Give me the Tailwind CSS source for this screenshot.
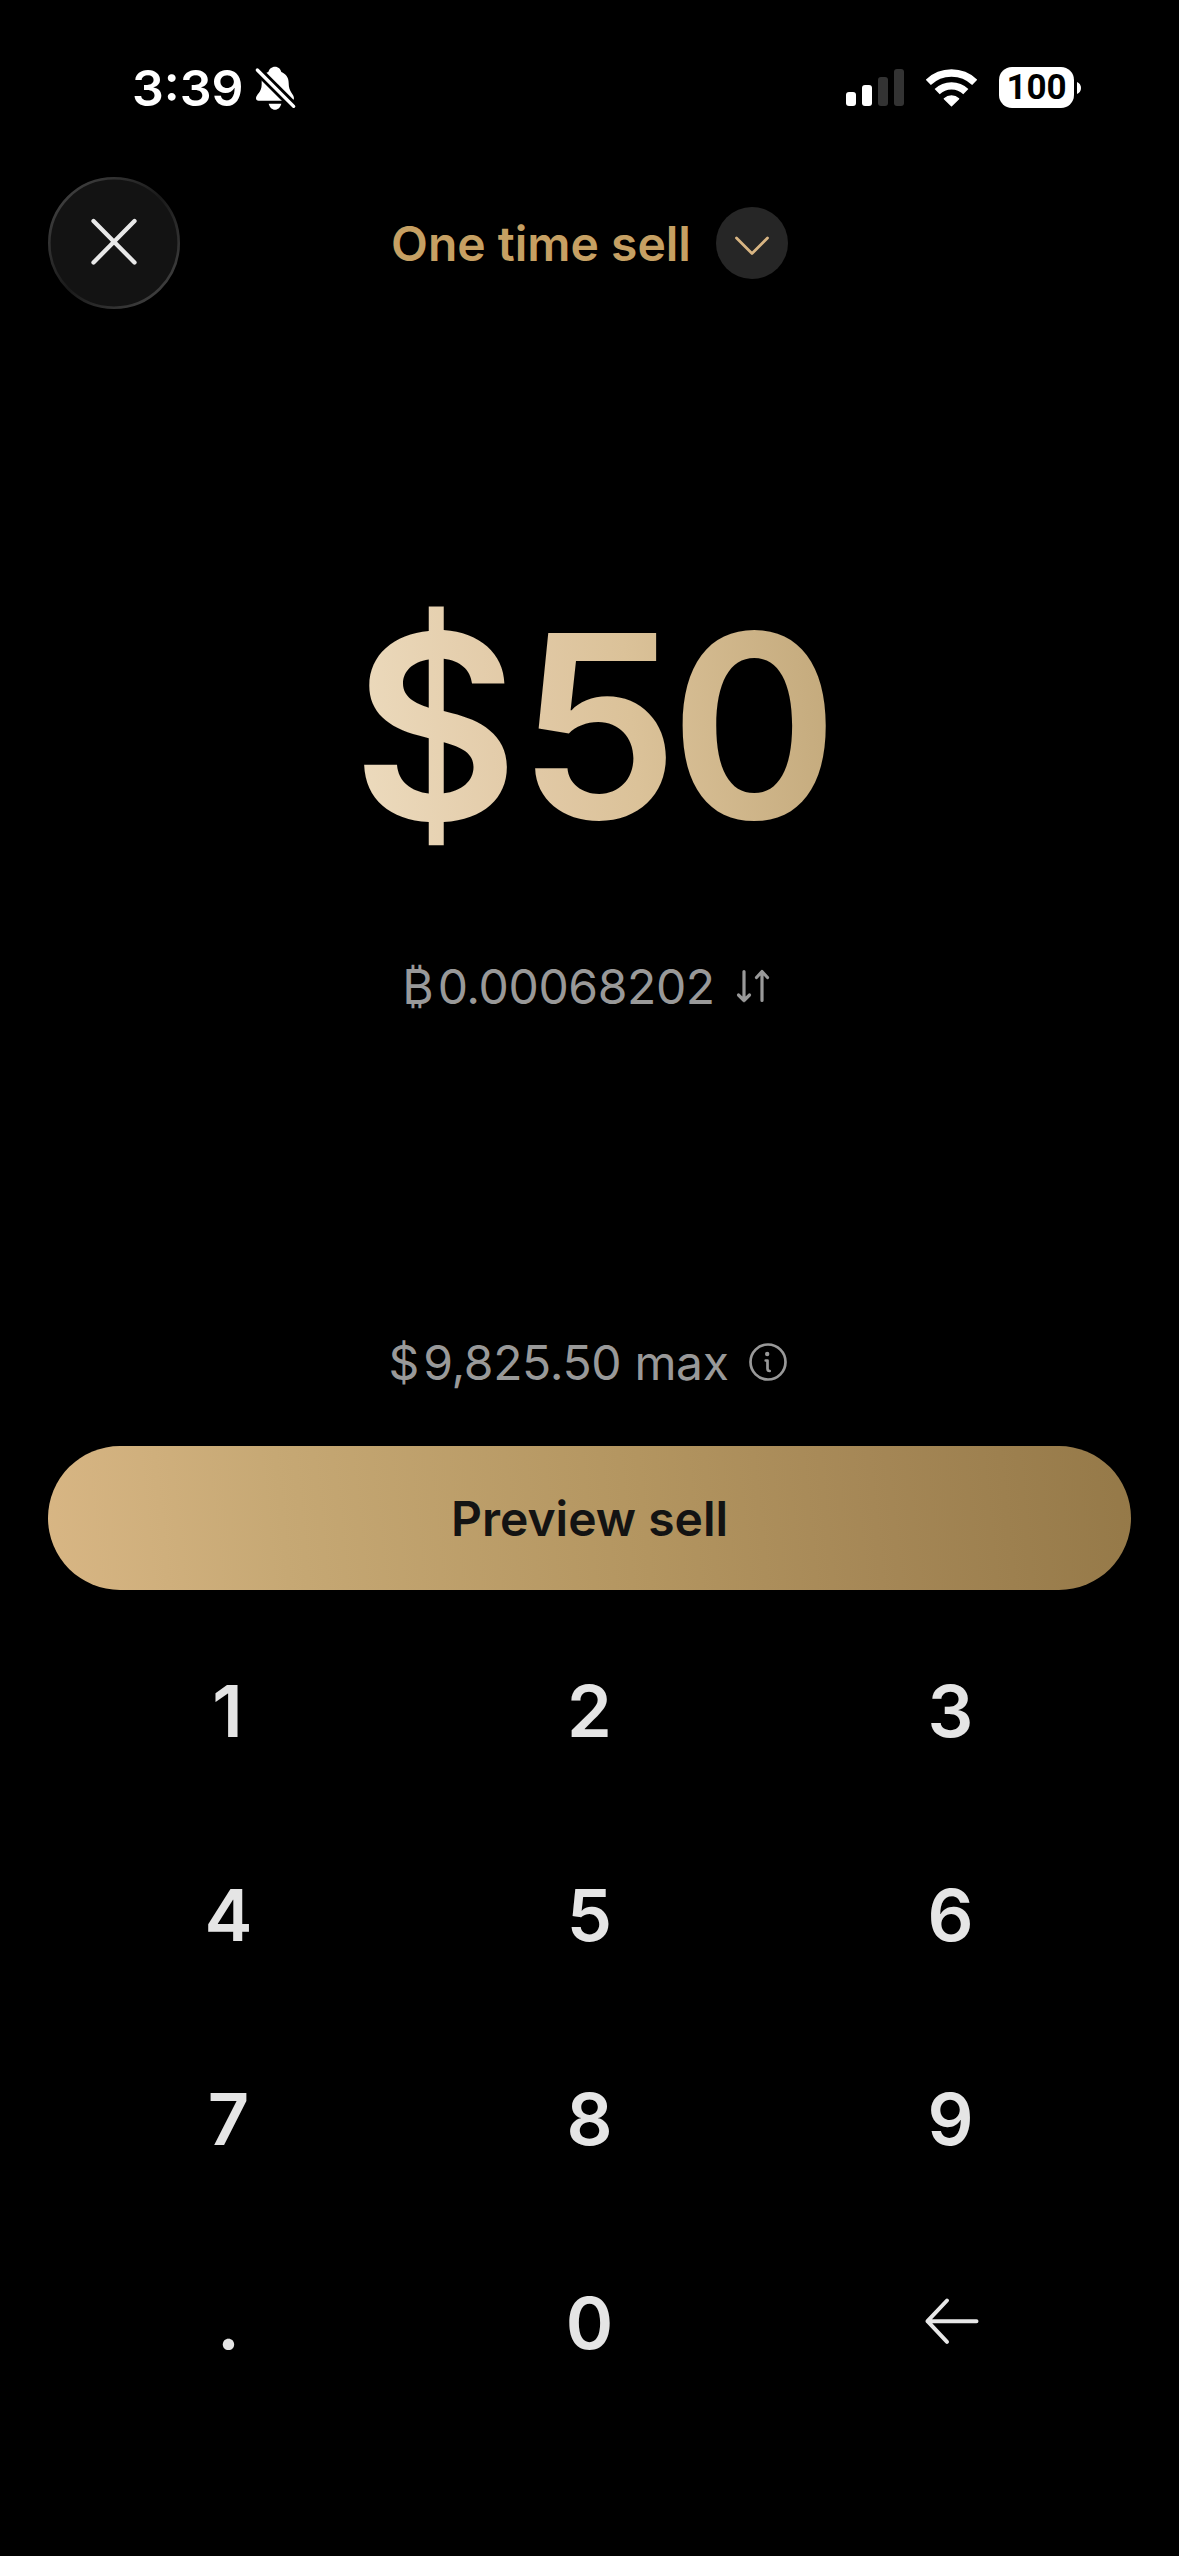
<!DOCTYPE html>
<html lang="en">
<head>
<meta charset="utf-8">
<title>One time sell</title>
<script src="https://cdn.jsdelivr.net/npm/@tailwindcss/browser@4"></script>
</head>
<body class="bg-black font-['Inter',sans-serif] text-white w-[1179px] h-[2556px] overflow-hidden flex flex-col">

<!-- Status bar -->
<header class="h-[177px] shrink-0 pt-[55px] pl-[132px] pr-[98px]">
  <div class="h-[65px] flex items-center justify-between">
    <div class="flex items-center">
      <span class="text-[50px] leading-[64px] font-semibold w-[121px]">3:39</span>
      <svg class="w-[44px] h-[47px] mt-[2px]" viewBox="429 46 132 141" fill="#fff">
        <path d="M438 146C438 134 455 128 455 105V97C455 79 464 71 475 67C477 58 485 51 495 51C505 51 512 58 514 67C527 73 536 82 536 100C536 128 552 132 552 146Q552 153 545 153H446Q438 153 438 146Z"/>
        <path d="M476 162H514C511 173 504 180 495 180C486 180 479 173 476 162Z"/>
        <path d="M430 49L570 189" stroke="#000" stroke-width="27"/>
        <path d="M442 61L551 170" stroke="#fff" stroke-width="10" stroke-linecap="round"/>
      </svg>
    </div>
    <div class="flex items-center gap-[22px]">
      <div class="flex items-end gap-[6px] h-[37px]">
        <i class="w-[10px] h-[14px] rounded-[3px] bg-white"></i>
        <i class="w-[10px] h-[21px] rounded-[3px] bg-white"></i>
        <i class="w-[10px] h-[29px] rounded-[3px] bg-[#333]"></i>
        <i class="w-[10px] h-[37px] rounded-[3px] bg-[#333]"></i>
      </div>
      <svg class="w-[51px] h-[38px]" viewBox="318 55.5 153 114" fill="none" stroke="#fff">
        <path d="M325 95.500A100.500 100.500 0 0 1 464 95.500" stroke-width="22"/>
        <path d="M351.500 123.400A62 62 0 0 1 437.500 123.400" stroke-width="22"/>
        <path d="M394.500 166L373 144.500A33 33 0 0 1 416 144.500Z" fill="#fff" stroke-width="4" stroke-linejoin="round"/>
      </svg>
      <div class="flex items-center gap-[3px]">
        <div class="w-[75px] h-[41px] rounded-[13px] bg-white text-black flex items-center justify-center font-['Roboto',sans-serif] text-[35px] leading-[41px] font-bold">100</div>
        <svg class="w-[4px] h-[12px]" viewBox="0 0 4 12" fill="#fff"><path d="M0 0C2.500 1 4 3.200 4 6S2.500 11 0 12Z"/></svg>
      </div>
    </div>
  </div>
</header>

<!-- Title bar -->
<nav class="grid grid-cols-[132px_1fr_132px] px-[48px] h-[132px] shrink-0 items-center">
  <button aria-label="Close">
    <svg class="size-[132px]" viewBox="0 0 132 132" fill="none">
      <defs>
        <linearGradient id="rim" x1="0.1" y1="0.1" x2="0.9" y2="0.9">
          <stop offset="0" stop-color="#404040"/>
          <stop offset="0.5" stop-color="#1a1a1a"/>
          <stop offset="1" stop-color="#404040"/>
        </linearGradient>
      </defs>
      <circle cx="66" cy="66" r="64.700" fill="#131313" stroke="url(#rim)" stroke-width="2.600"/>
      <path d="M45.500 44L86.500 85.500M86.500 44L45.500 85.500" stroke="#e8e8e8" stroke-width="4.300" stroke-linecap="round"/>
    </svg>
  </button>
  <div class="flex justify-center items-center gap-[25px]">
    <span class="text-[48px] leading-[60px] font-semibold text-[#c6a063] pt-px">One time sell</span>
    <svg class="size-[72px]" viewBox="0 0 72 72" fill="none">
      <circle cx="36" cy="36" r="36" fill="#262626"/>
      <path d="M20.500 31L36 46.500L51.500 31" stroke="#d8b583" stroke-width="2.800" stroke-linecap="round" stroke-linejoin="round"/>
    </svg>
  </div>
</nav>

<!-- Amount -->
<main class="h-[1137px] shrink-0 flex flex-col items-center">
  <div class="mt-[267px] ml-[3px] text-[256px] leading-[300px] font-semibold bg-[linear-gradient(84deg,#eddcbf_0%,#e2caa7_36%,#dbc299_58%,#c3a97b_100%)] bg-clip-text text-transparent"><span class="tracking-[-1px]">$</span><span class="tracking-[-9px]">50</span></div>
  <div class="mt-[81px] flex items-center text-[48px] leading-[60px] text-[#999]">
    <span>₿</span>
    <span class="ml-[4px] tracking-[-0.38px]">0.00068202</span>
    <svg class="w-[36px] h-[40px] ml-[20px] mr-[6px]" viewBox="0 0 36 40" fill="none" stroke="#999" stroke-width="3.200" stroke-linecap="round" stroke-linejoin="round">
      <path d="M9 4.500V33.500M3.500 28L9 33.500L14.500 28"/>
      <path d="M27 33.500V4.500M21.500 10.500L27 4.500L32.500 10.500"/>
    </svg>
  </div>
  <div class="mt-[316px] flex items-center text-[48px] leading-[60px] text-[#999]">
    <span>$</span>
    <span class="ml-[4px] tracking-[-0.34px]">9,825.50 max</span>
    <svg class="size-[40px] ml-[19px] mr-[3px]" viewBox="0 0 40 40" fill="none" stroke="#999" stroke-linecap="round" stroke-linejoin="round">
      <circle cx="20" cy="19" r="17.500" stroke-width="2.700"/>
      <circle cx="19.200" cy="11" r="2.200" fill="#999" stroke="none"/>
      <path d="M17.700 17.500H19.500V25.500Q19.500 28 21.700 28" stroke-width="2.700"/>
    </svg>
  </div>
</main>

<button class="mx-[48px] h-[144px] shrink-0 rounded-full bg-[linear-gradient(84deg,#d8b684_0%,#c6a874_22%,#b39560_55%,#a58756_76%,#957948_100%)] pt-[2px] text-[48px] leading-[60px] font-semibold text-[#131313]">Preview sell</button>

<!-- Keypad -->
<div class="grid grid-cols-3 auto-rows-[204px] px-[48px] mt-[19px] text-[72px] font-semibold text-[#e5e5e5] place-items-center">
  <span class="pr-[2px]">1</span><span>2</span><span>3</span>
  <span>4</span><span>5</span><span>6</span>
  <span>7</span><span>8</span><span>9</span>
  <span>.</span><span>0</span>
  <svg class="size-[60px]" viewBox="0 0 60 60" fill="none" stroke="#e8e8e8" stroke-width="4" stroke-linecap="round" stroke-linejoin="round">
    <path d="M55.500 28.200H6.500L26 7.500M6.500 28.200L26 48.900"/>
  </svg>
</div>
</body>
</html>
